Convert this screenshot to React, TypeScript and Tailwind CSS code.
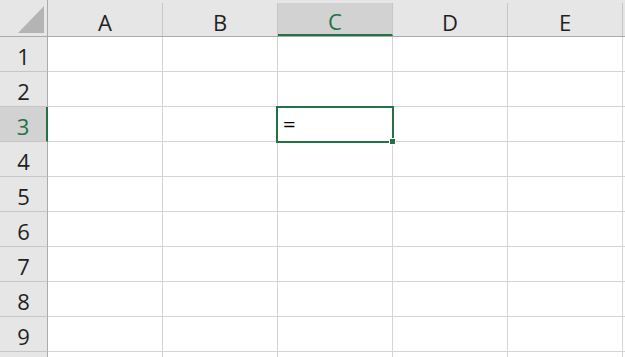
import React from "react";

const COLS = ["A", "B", "C", "D", "E"];
const ROWS = [1, 2, 3, 4, 5, 6, 7, 8, 9, 10];
const SEL_COL = "C";
const SEL_ROW = 3;

export default function App() {
  return (
    <div
      className="w-[625px] h-[357px] overflow-hidden bg-white text-[#1f1f1f]"
      style={{ fontFamily: '"Open Sans", "Noto Sans", "Liberation Sans", sans-serif' }}
    >
      {/* Column header row */}
      <div className="flex h-[37px] bg-[#e6e6e6] border-b border-[#ababab] box-border">
        <div className="w-[48px] shrink-0 h-full border-r border-[#ababab] flex items-start justify-start">
          <svg width="47" height="36" viewBox="0 0 47 36" className="block">
            <polygon points="44,6 44,33 18,33" fill="#b4b4b4" />
          </svg>
        </div>
        {COLS.map((c) => {
          const sel = c === SEL_COL;
          return (
            <div key={c} className="w-[115px] shrink-0 h-full pt-[3px] flex">
              <div
                className={
                  "flex-1 flex items-center justify-center border-r border-[#c6c6c6] text-[22px] leading-none pt-[4px] " +
                  (sel ? "bg-[#d2d2d2] text-[#217346] border-b-2 border-b-[#217346]" : "")
                }
              >
                {c}
              </div>
            </div>
          );
        })}
        <div className="flex-1" />
      </div>

      {/* Rows */}
      {ROWS.map((r) => {
        const selRow = r === SEL_ROW;
        const visibleLabel = r <= 9;
        return (
          <div key={r} className="flex h-[35px] box-border">
            <div
              className={
                "w-[48px] shrink-0 h-full flex items-center justify-center text-[22px] leading-none pt-[4px] border-b border-[#c6c6c6] " +
                (selRow
                  ? "bg-[#d2d2d2] text-[#217346] border-r-2 border-r-[#217346]"
                  : "bg-[#e6e6e6] border-r border-r-[#ababab]")
              }
            >
              {visibleLabel ? r : null}
            </div>
            {COLS.map((c) => {
              const isSel = selRow && c === SEL_COL;
              return (
                <div
                  key={c}
                  className="relative w-[115px] shrink-0 h-full border-r border-b border-[#d4d4d4]"
                >
                  {isSel && (
                    <div className="absolute left-[-2px] top-[-1px] w-[118px] h-[37px] border-2 border-[#217346] z-10">
                      <div className="absolute left-[5px] top-[4px] text-[22px] leading-none text-black">
                        =
                      </div>
                      <div className="absolute right-[-4px] bottom-[-4px] w-[7px] h-[7px] bg-[#217346] border border-white" />
                    </div>
                  )}
                </div>
              );
            })}
            <div className="flex-1 border-b border-[#d4d4d4]" />
          </div>
        );
      })}
    </div>
  );
}
